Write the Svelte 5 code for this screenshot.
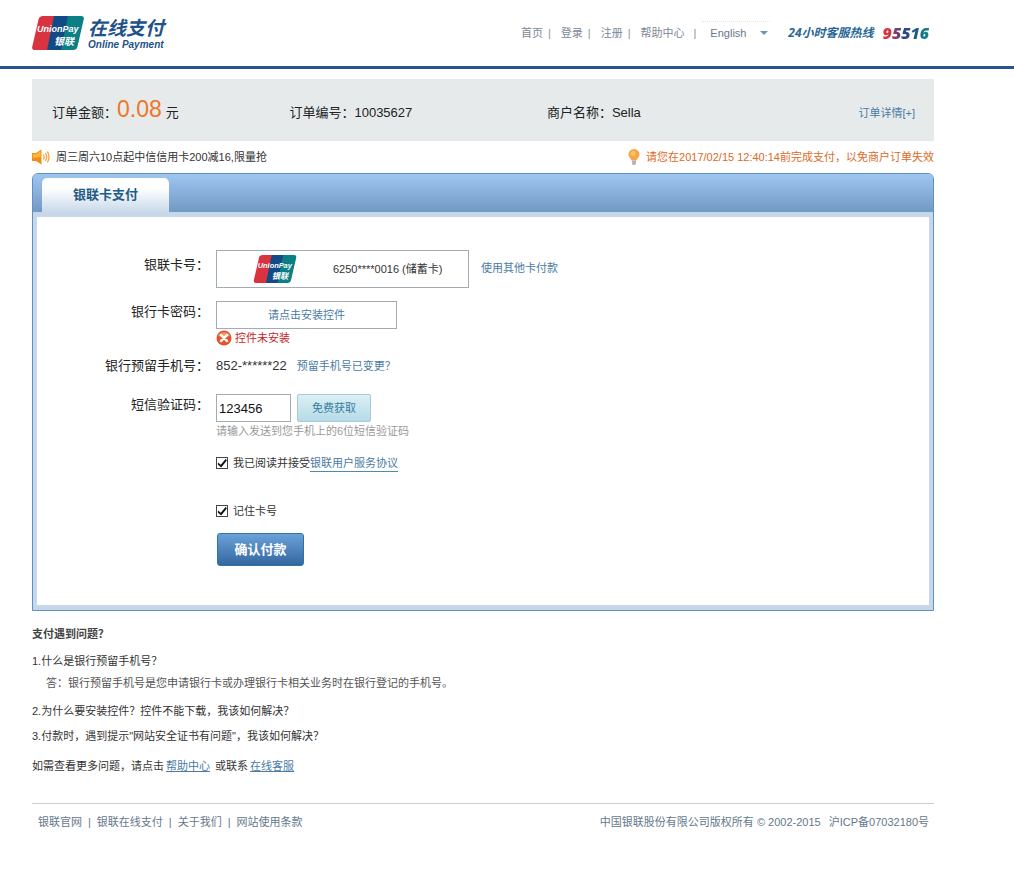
<script>
  let language = $state('en');
  let code = $state('123456');
  let agreed = $state(true);
  let remember = $state(true);

  const nav = ['首页', '登录', '注册', '帮助中心'];
  const links = ['银联官网', '银联在线支付', '关于我们', '网站使用条款'];
  const order = [
    { label: '订单编号：', value: '10035627' },
    { label: '商户名称：', value: 'Sella' }
  ];
</script>

{#snippet brand(size)}
  <svg class={size} viewBox="0 0 52 34" aria-label="UnionPay 银联">
    <path d="M11 0H24L17 34H3Q-0.500 34 0.300 30.500L6.500 3.500Q7.300 0 11 0Z" fill="#d9333f" />
    <path d="M22 0H38L31 34H15Z" fill="#124a88" />
    <path d="M36 0H49Q52.500 0 51.700 3.500L45.500 30.500Q44.700 34 41 34H29Z" fill="#0b7f86" />
    <text x="5" y="16" class="brand-latin">UnionPay</text>
    <text x="22" y="29" class="brand-cjk">银联</text>
  </svg>
{/snippet}

<header>
  <div class="logo">
    {@render brand('brand-large')}
    <div class="logo-text">
      <strong>在线支付</strong>
      <em>Online Payment</em>
    </div>
  </div>
  <div class="tools">
    <nav>
      {#each nav as item}
        <a href="#top">{item}</a><i>|</i>
      {/each}
    </nav>
    <div class="language">
      <select aria-label="Language" bind:value={language}>
        <option value="en">English</option>
      </select>
      <svg viewBox="0 0 8 5" aria-hidden="true"><path d="M0 0H8L4 4Z" fill="#6f94b5" /></svg>
    </div>
    <div class="hotline"><span>24小时客服热线</span><b>95516</b></div>
  </div>
</header>

<main>
  <section class="order">
    <div class="amount">订单金额：<strong>0.08</strong>元</div>
    {#each order as item}
      <div>{item.label}<span>{item.value}</span></div>
    {/each}
    <a href="#order">订单详情[+]</a>
  </section>

  <div class="notices">
    <p>
      <svg class="speaker" viewBox="0 0 18 16" aria-hidden="true">
        <path d="M0 4H4L9.500 0.500V15.500L4 12H0Z" fill="#f58a1c" />
        <path d="M0.800 5H4.300L8.700 2V8L0.800 9Z" fill="#fdb73a" />
        <path d="M11.300 5.500Q13 8 11.300 10.500M13.300 4Q16 8 13.300 12M15.300 2.500Q18.800 8 15.300 13.500" fill="none" stroke="#f3a33c" stroke-width="1.300" />
      </svg>
      周三周六10点起中信信用卡200减16,限量抢
    </p>
    <p class="deadline">
      <svg class="bulb" viewBox="0 0 12 16" aria-hidden="true">
        <path d="M6 0A5.500 5.500 0 0 1 11.500 5.500C11.500 8 9 9.500 8.500 11.500H3.500C3 9.500 0.500 8 0.500 5.500A5.500 5.500 0 0 1 6 0Z" fill="#f6a646" />
        <circle cx="5" cy="4.500" r="2.500" fill="#fbc460" />
        <path d="M4 11.500H8V15L7 16H5L4 15Z" fill="#b9b4ae" />
      </svg>
      请您在2017/02/15 12:40:14前完成支付，以免商户订单失效
    </p>
  </div>

  <section class="panel">
    <div class="tabs"><h1>银联卡支付</h1></div>
    <form onsubmit={(e) => e.preventDefault()}>
      <div class="row card-row">
        <span class="label">银联卡号：</span>
        <div class="line">
          <div class="card">
            {@render brand('brand-small')}
            <span>6250****0016 (储蓄卡)</span>
          </div>
          <a href="#cards">使用其他卡付款</a>
        </div>
      </div>
      <div class="row password-row">
        <span class="label">银行卡密码：</span>
        <div>
          <button type="button" class="install">请点击安装控件</button>
          <p class="error">
            <svg viewBox="0 0 16 16" aria-hidden="true">
              <circle cx="8" cy="8" r="7.500" fill="#e8502a" />
              <path d="M2 6A6.500 6 0 0 1 14 6Q8 8 2 6Z" fill="#f5925c" />
              <path d="M5 5L11 11M11 5L5 11" stroke="#fff" stroke-width="2.500" stroke-linecap="round" />
            </svg>
            控件未安装
          </p>
        </div>
      </div>
      <div class="row phone-row">
        <span class="label">银行预留手机号：</span>
        <div class="line"><span class="phone">852-******22</span><a href="#phone">预留手机号已变更？</a></div>
      </div>
      <div class="row code-row">
        <label class="label" for="code">短信验证码：</label>
        <div>
          <div class="line">
            <input id="code" class="code" type="text" bind:value={code} />
            <button type="button" class="fetch">免费获取</button>
          </div>
          <p class="hint">请输入发送到您手机上的6位短信验证码</p>
        </div>
      </div>
      <div class="check agree">
        <input id="agree" type="checkbox" bind:checked={agreed} />
        <label for="agree">我已阅读并接受</label><a href="#terms">银联用户服务协议</a>
      </div>
      <div class="check remember">
        <input id="remember" type="checkbox" bind:checked={remember} />
        <label for="remember">记住卡号</label>
      </div>
      <button class="submit">确认付款</button>
    </form>
  </section>

  <section class="faq">
    <h2>支付遇到问题？</h2>
    <p>1.什么是银行预留手机号？</p>
    <p class="answer">答：银行预留手机号是您申请银行卡或办理银行卡相关业务时在银行登记的手机号。</p>
    <p>2.为什么要安装控件？控件不能下载，我该如何解决？</p>
    <p>3.付款时，遇到提示"网站安全证书有问题"，我该如何解决？</p>
    <p class="more">如需查看更多问题，请点击<a href="#help">帮助中心</a> 或联系<a href="#service">在线客服</a></p>
  </section>

  <footer>
    <nav>
      {#each links as item, i}
        {#if i > 0}<i>|</i>{/if}<a href="#top">{item}</a>
      {/each}
    </nav>
    <p>中国银联股份有限公司版权所有 © 2002-2015 <span>沪ICP备07032180号</span></p>
  </footer>
</main>

<style>
  :global(body) {
    background: #fff;
    color: #333;
    font: 11px/18px 'Liberation Sans', 'Noto Sans CJK SC', sans-serif;
  }
  p, h1, h2 { margin: 0; }
  a { color: #4a7ba3; text-decoration: none; }
  button, input, select { font-family: inherit; margin: 0; box-sizing: border-box; }
  button { padding: 0 0 3px; }
  i { font-style: normal; }
  svg { display: block; flex: none; }

  header {
    box-sizing: border-box;
    height: 69px;
    padding: 0 84px 0 32px;
    border-bottom: 3px solid #2c5390;
    display: flex;
    justify-content: space-between;
    align-items: center;
  }
  .logo { display: flex; align-items: center; gap: 4px; }
  .brand-large { width: 52px; height: 34px; }
  .brand-small { width: 44px; height: 28px; }
  .brand-latin { font: italic bold 9px 'Liberation Sans', sans-serif; fill: #fff; }
  .brand-cjk { font: italic bold 10px 'Noto Sans CJK SC', sans-serif; fill: #fff; }
  .logo-text { display: flex; flex-direction: column; color: #1f5288; }
  .logo-text strong { font: italic bold 19px/24px 'Noto Sans CJK SC', sans-serif; }
  .logo-text em { font: italic bold 10px/12px 'Liberation Sans', sans-serif; }
  .tools { display: flex; align-items: center; }
  .tools nav { display: flex; }
  .tools nav a { color: #7b8797; }
  .tools nav i { color: #8a8f9c; margin: 0 10px 0 5px; }
  .tools nav i:last-child { margin: 0 0 0 9px; }
  .language {
    display: flex;
    align-items: center;
    height: 24px;
    width: 68px;
    margin: 0 18px 0 6px;
    border-top: 1px dotted #e4e7ea;
  }
  .language select {
    appearance: none;
    border: 0;
    padding: 0 0 2px 8px;
    width: 58px;
    background: transparent;
    color: #66788a;
    font-size: 11px;
  }
  .language svg { width: 8px; height: 5px; }
  .hotline { display: flex; align-items: center; gap: 9px; }
  .hotline span { font: italic bold 12px/18px 'Open Sans', 'Noto Sans CJK SC', sans-serif; color: #2a6798; }
  .hotline b {
    font: italic 800 16px/18px 'Open Sans', sans-serif;
    background: linear-gradient(90deg, #e0333c 10%, #2b4a86 45%, #1c4f8c 65%, #118089 90%);
    background-clip: text;
    color: transparent;
    padding-right: 1px;
  }

  main { padding: 10px 80px 48px 32px; }
  .order {
    display: grid;
    grid-template-columns: 237fr 257fr 311fr auto;
    align-items: center;
    height: 62px;
    box-sizing: border-box;
    padding: 5px 19px 0 20px;
    background: #e6eaeb;
    font-size: 13px;
    color: #222;
  }
  .order strong { font-size: 23px; font-weight: normal; color: #ee7625; margin: 0 4px 0 0; }
  .order a { font-size: 11px; }
  .amount { padding-bottom: 3px; }

  .notices { display: flex; justify-content: space-between; height: 32px; align-items: center; }
  .notices p { display: flex; align-items: center; gap: 6px; }
  .notices .deadline { color: #dd6a26; }
  .speaker { width: 18px; height: 16px; }
  .bulb { width: 12px; height: 16px; }

  .panel { border: 1px solid #5f92c0; border-radius: 6px 6px 0 0; background: #c5d7e8; }
  .tabs {
    height: 38px;
    display: flex;
    align-items: flex-end;
    padding-left: 9px;
    border-radius: 5px 5px 0 0;
    background: linear-gradient(#9fc6f1, #7199c4);
  }
  .tabs h1 {
    width: 127px;
    border-radius: 5px 5px 0 0;
    background: linear-gradient(#fff 30%, #c9d9ea);
    color: #1f5c86;
    font-size: 13px;
    line-height: 34px;
    text-align: center;
  }
  form { margin: 5px 4px; padding: 33px 0 39px; background: #fff; }
  .row { display: grid; grid-template-columns: 172px 1fr; column-gap: 7px; }
  .label { font-size: 13px; line-height: 20px; text-align: right; color: #222; padding-top: 1px; white-space: nowrap; }
  .line { display: flex; align-items: center; }
  .card-row { margin-bottom: 13px; }
  .card-row .label { padding-top: 5px; }
  .card-row .line { gap: 12px; }
  .card-row a { padding-bottom: 3px; }
  .card {
    box-sizing: border-box;
    width: 253px;
    height: 38px;
    border: 1px solid #a3abb5;
    padding-left: 36px;
    display: flex;
    align-items: center;
    gap: 36px;
  }
  .install {
    display: block;
    width: 181px;
    height: 28px;
    border: 1px solid #a3abb5;
    background: #fff;
    color: #4a7ba3;
    font-size: 11px;
  }
  .error { display: flex; align-items: center; gap: 3px; color: #c5252c; }
  .error svg { width: 16px; height: 16px; }
  .password-row { margin-bottom: 9px; }
  .phone-row { margin-bottom: 18px; }
  .phone-row .label { padding-top: 0; }
  .phone-row .line { gap: 10px; height: 20px; }
  .phone { font-size: 13px; }
  .code-row .line { gap: 6px; }
  .code { width: 75px; height: 28px; border: 1px solid #a3abb5; padding: 0 2px; font-size: 13px; color: #111; }
  .fetch {
    width: 74px;
    height: 28px;
    border: 1px solid #a5cbd9;
    border-radius: 2px;
    background: linear-gradient(#dceff5, #b5dbe7);
    color: #337f9e;
    font-size: 11px;
  }
  .hint { color: #999; }
  .check { display: flex; align-items: center; padding-left: 179px; height: 18px; }
  .check input {
    appearance: none;
    width: 12px;
    height: 12px;
    margin-right: 5px;
    border: 1px solid #444;
    background: #fff;
    display: grid;
  }
  .check input:checked::after {
    content: '';
    background: #111;
    clip-path: polygon(10% 45%, 38% 68%, 88% 8%, 98% 24%, 42% 94%, 8% 66%);
  }
  .agree { margin: 14px 0 30px; }
  .agree a { line-height: 16px; border-bottom: 1px solid #4a8cb0; }
  .remember { margin-bottom: 13px; }
  .submit {
    display: block;
    width: 87px;
    height: 33px;
    margin-left: 180px;
    border: 1px solid #2f74a5;
    border-radius: 3px;
    background: linear-gradient(#6ba1da, #34679f);
    color: #fff;
    font-size: 13px;
    font-weight: bold;
  }

  .faq { padding-top: 14px; }
  .faq h2 { font-size: 11px; color: #444; margin-bottom: 9px; }
  .faq p { margin-bottom: 7px; }
  .faq .answer { padding-left: 14px; margin: -3px 0 10px; color: #555; }
  .faq .more { margin: 12px 0 0; }
  .faq .more a { text-decoration: underline; margin: 0 2px; }

  footer {
    display: flex;
    justify-content: space-between;
    margin-top: 28px;
    padding: 9px 5px 0 6px;
    border-top: 1px solid #ccc;
    color: #66788a;
  }
  footer a { color: #66788a; }
  footer i { margin: 0 6px; }
  footer span { margin-left: 5px; }
</style>
